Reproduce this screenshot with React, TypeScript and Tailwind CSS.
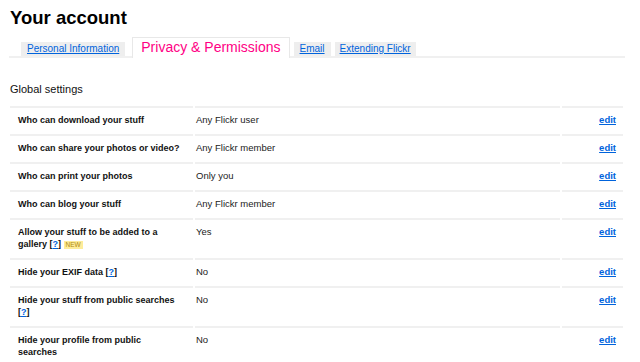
import React from "react";

type Row = {
  label: React.ReactNode;
  value: string;
};

const Help = () => (
  <span>
    [<a className="text-[#0063dc] underline">?</a>]
  </span>
);

const rows: Row[] = [
  { label: "Who can download your stuff", value: "Any Flickr user" },
  { label: "Who can share your photos or video?", value: "Any Flickr member" },
  { label: "Who can print your photos", value: "Only you" },
  { label: "Who can blog your stuff", value: "Any Flickr member" },
  {
    label: (
      <>
        Allow your stuff to be added to a
        <br />
        gallery <Help />{" "}
        <span className="inline-block bg-[#fdec9a] px-[2px] align-middle text-[6.5px] font-normal leading-[8px] text-[#b08a10]">
          NEW
        </span>
      </>
    ),
    value: "Yes",
  },
  {
    label: (
      <>
        Hide your EXIF data <Help />
      </>
    ),
    value: "No",
  },
  {
    label: (
      <>
        Hide your stuff from public searches
        <br />
        <Help />
      </>
    ),
    value: "No",
  },
  {
    label: (
      <>
        Hide your profile from public
        <br />
        searches
      </>
    ),
    value: "No",
  },
];

const App = () => {
  return (
    <div className="h-[362px] w-[640px] overflow-hidden bg-white font-['Liberation_Sans',Arial,sans-serif] text-[#111]">
      <div className="pl-[10px]">
        <h1 className="mt-[7px] text-[18.5px] font-bold leading-[22px] text-black">
          Your account
        </h1>

        {/* tabs */}
        <div className="mt-[8px] ml-[-1px] flex w-[616px] items-end border-b-2 border-[#f0f0f0] pl-[12px]">
          <a className="mr-[4px] h-[14px] bg-[#eeeeee] px-[6px] text-[10px] leading-[14px] text-[#0063dc] underline">
            Personal Information
          </a>
          <span className="mx-[3px] mb-[-2px] h-[21px] border border-b-0 border-[#e8e8e8] bg-white px-[8px] text-[14px] leading-[19px] text-[#ff0084]">
            Privacy &amp; Permissions
          </span>
          <a className="ml-[1px] mr-[4px] h-[14px] bg-[#eeeeee] px-[6px] text-[10px] leading-[14px] text-[#0063dc] underline">
            Email
          </a>
          <a className="h-[14px] bg-[#eeeeee] px-[5px] text-[10px] leading-[14px] text-[#0063dc] underline">
            Extending Flickr
          </a>
        </div>

        <h2 className="mt-[24px] text-[11px] leading-[14px] text-[#111]">
          Global settings
        </h2>

        <div className="mt-[10px] grid w-[613px] grid-cols-[183px_365px_61px] gap-x-[2px]">
          {rows.map((r, i) => (
            <React.Fragment key={i}>
              <div className="border-t-2 border-[#f0f0f0] pt-[6px] pb-[8px] pl-[8px] text-[9px] font-bold leading-[12px] text-[#111]">
                {r.label}
              </div>
              <div className="border-t-2 border-[#f0f0f0] pt-[6px] pb-[8px] pl-[1px] text-[9.5px] leading-[12px] text-[#222]">
                {r.value}
              </div>
              <div className="border-t-2 border-[#f0f0f0] pt-[6px] pb-[8px] pr-[7px] text-right text-[9.5px] font-bold leading-[12px]">
                <a className="text-[#0063dc] underline">edit</a>
              </div>
            </React.Fragment>
          ))}
        </div>
      </div>
    </div>
  );
};

export default App;
